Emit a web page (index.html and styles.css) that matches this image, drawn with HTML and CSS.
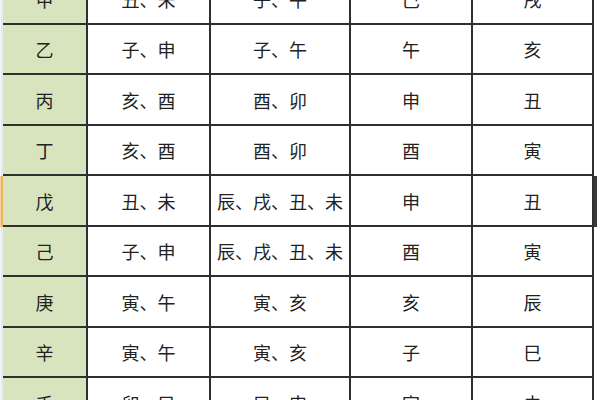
FILE: index.html
```html
<!DOCTYPE html>
<html lang="zh">
<head>
<meta charset="utf-8">
<link rel="stylesheet" href="styles.css">
</head>
<body>
<div class="sheet">
  <div class="row r50"><div class="strip"></div><div class="cell head">甲</div><div class="cell">丑、未</div><div class="cell">子、午</div><div class="cell">巳</div><div class="cell">戌</div><div class="sel"></div></div>
  <div class="row r50"><div class="strip"></div><div class="cell head">乙</div><div class="cell">子、申</div><div class="cell">子、午</div><div class="cell">午</div><div class="cell">亥</div><div class="sel"></div></div>
  <div class="row r51"><div class="strip"></div><div class="cell head">丙</div><div class="cell">亥、酉</div><div class="cell">酉、卯</div><div class="cell">申</div><div class="cell">丑</div><div class="sel"></div></div>
  <div class="row r50"><div class="strip"></div><div class="cell head">丁</div><div class="cell">亥、酉</div><div class="cell">酉、卯</div><div class="cell">酉</div><div class="cell">寅</div><div class="sel"></div></div>
  <div class="row r51 active"><div class="strip"></div><div class="cell head">戊</div><div class="cell">丑、未</div><div class="cell">辰、戌、丑、未</div><div class="cell">申</div><div class="cell">丑</div><div class="sel"></div></div>
  <div class="row r50"><div class="strip"></div><div class="cell head">己</div><div class="cell">子、申</div><div class="cell">辰、戌、丑、未</div><div class="cell">酉</div><div class="cell">寅</div><div class="sel"></div></div>
  <div class="row r51"><div class="strip"></div><div class="cell head">庚</div><div class="cell">寅、午</div><div class="cell">寅、亥</div><div class="cell">亥</div><div class="cell">辰</div><div class="sel"></div></div>
  <div class="row r50"><div class="strip"></div><div class="cell head">辛</div><div class="cell">寅、午</div><div class="cell">寅、亥</div><div class="cell">子</div><div class="cell">巳</div><div class="sel"></div></div>
  <div class="row r51"><div class="strip"></div><div class="cell head">壬</div><div class="cell">卯、巳</div><div class="cell">巳、申</div><div class="cell">寅</div><div class="cell">未</div><div class="sel"></div></div>
</div>
</body>
</html>
```

FILE: styles.css
```css
html, body {
  margin: 0;
  padding: 0;
  background: #ffffff;
  overflow: hidden;
}

body {
  width: 600px;
  height: 400px;
  font-family: "Noto Sans CJK SC", "Noto Sans CJK JP", sans-serif;
  font-size: 18px;
  color: #222222;
}

.sheet {
  margin-top: -25px;
  display: flex;
  flex-direction: column;
}

.row {
  display: grid;
  grid-template-columns: 3px 85px 123px 140px 122px 121px 6px;
}

.r50 { height: 50px; }
.r51 { height: 51px; }

.strip {
  background: #e4ecef;
  border-left: 1px solid #f2f5f7;
}

.cell {
  display: flex;
  align-items: center;
  justify-content: center;
  border-right: 2px solid #2f2f2f;
  border-bottom: 2px solid #2f2f2f;
  background: #ffffff;
  white-space: nowrap;
  letter-spacing: 0;
}

.head {
  background: #d8e4bd;
}

.sel {
  background: #ffffff;
}

.active .strip {
  background: #f0b45c;
  border-left: 1px solid #f6d3a0;
}

.active .sel {
  background: linear-gradient(to right, #3a3a3a 0, #3a3a3a 3px, #ffffff 3px);
}
```
